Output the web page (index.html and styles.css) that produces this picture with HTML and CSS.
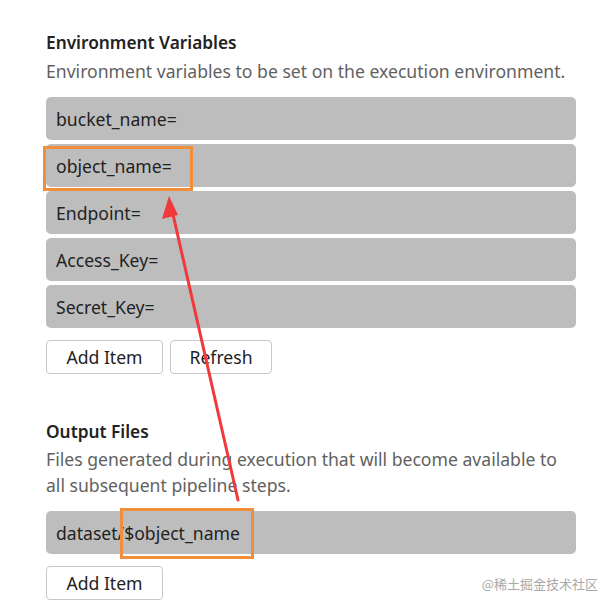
FILE: index.html
```html
<!DOCTYPE html>
<html lang="en">
<head>
<meta charset="utf-8">
<title>Environment Variables</title>
<link rel="stylesheet" href="styles.css">
</head>
<body>
<div class="page">
  <section class="group env">
    <h2 class="title">Environment Variables</h2>
    <p class="desc">Environment variables to be set on the execution environment.</p>
    <div class="list">
      <div class="field">bucket_name=</div>
      <div class="field">object_name=</div>
      <div class="field">Endpoint=</div>
      <div class="field">Access_Key=</div>
      <div class="field">Secret_Key=</div>
    </div>
    <div class="actions">
      <button class="btn btn-add">Add Item</button>
      <button class="btn btn-refresh">Refresh</button>
    </div>
  </section>
  <section class="group out">
    <h2 class="title">Output Files</h2>
    <p class="desc">Files generated during execution that will become available to all subsequent pipeline steps.</p>
    <div class="list">
      <div class="field">dataset/$object_name</div>
    </div>
    <div class="actions">
      <button class="btn btn-add">Add Item</button>
    </div>
  </section>

  <div class="mark mark-a"></div>
  <div class="mark mark-b"></div>
  <svg class="arrow" width="616" height="608" viewBox="0 0 616 608">
    <line x1="238" y1="500" x2="172" y2="210" stroke="#f0393a" stroke-width="3" stroke-linecap="round"/>
    <polygon points="169,196 162,219 178,215" fill="#f0393a"/>
  </svg>
  <div class="watermark">@稀土掘金技术社区</div>
</div>
</body>
</html>
```

FILE: styles.css
```css
* { box-sizing: border-box; }
html, body { margin: 0; padding: 0; background: #fff; }
body {
  font-family: "Noto Sans", "Open Sans", "Noto Sans CJK SC", sans-serif;
  color: #222;
}
.page {
  position: relative;
  width: 616px;
  height: 608px;
  overflow: hidden;
  padding: 31px 40px 0 46px;
}
.title {
  margin: 0;
  font-size: 17.3px;
  font-weight: 600;
  line-height: 24px;
  color: #222;
}
.desc {
  margin: 3px 0 0;
  font-size: 17.6px;
  line-height: 26px;
  color: #616161;
}
.list {
  margin-top: 13px;
  display: flex;
  flex-direction: column;
  gap: 4px;
}
.field {
  height: 43px;
  background: #bdbdbd;
  border-radius: 5px;
  padding: 0 10px;
  display: flex;
  align-items: center;
  font-size: 17.6px;
  color: #222;
}
.actions {
  margin-top: 12px;
  display: flex;
  gap: 7px;
}
.btn {
  height: 34px;
  background: #fff;
  border: 1px solid #c8c8c8;
  border-radius: 4px;
  font-family: inherit;
  font-size: 17.6px;
  color: #222;
  padding: 0;
}
.btn-add { width: 117px; }
.btn-refresh { width: 102px; }
.out { margin-top: 46px; }
.out .desc { margin-top: 2px; }
.out .list { margin-top: 13px; }
.out .actions { margin-top: 12px; }

.mark {
  position: absolute;
  border: 3px solid #ef8e3d;
}
.mark-a { left: 43px; top: 146px; width: 150px; height: 45px; }
.mark-b { left: 120px; top: 508px; width: 134px; height: 51px; }
.arrow { position: absolute; left: 0; top: 0; pointer-events: none; }
.watermark {
  position: absolute;
  right: 18px;
  top: 574px;
  font-size: 13px;
  color: #a8a8a8;
  font-family: "Noto Sans CJK SC", "Noto Sans", sans-serif;
}
```
